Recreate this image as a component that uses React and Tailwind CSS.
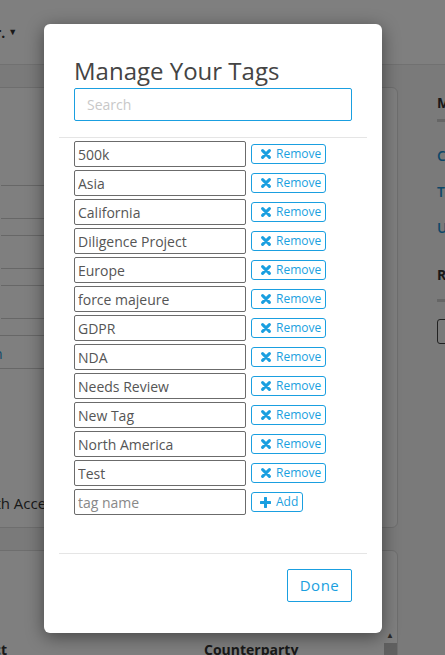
import React from "react";

const tags = [
  "500k",
  "Asia",
  "California",
  "Diligence Project",
  "Europe",
  "force majeure",
  "GDPR",
  "NDA",
  "Needs Review",
  "New Tag",
  "North America",
  "Test",
];

const XIcon = () => (
  <svg width="10" height="10" viewBox="0 0 10 10" className="shrink-0">
    <path d="M1.6 1.6 L8.4 8.4 M8.4 1.6 L1.6 8.4" stroke="#1a9fe0" strokeWidth="3" strokeLinecap="round" />
  </svg>
);

const PlusIcon = () => (
  <svg width="11" height="11" viewBox="0 0 11 11" className="shrink-0">
    <path d="M5.5 1 V10 M1 5.5 H10" stroke="#1a9fe0" strokeWidth="3" strokeLinecap="round" />
  </svg>
);

const TagRow = ({ name }) => (
  <div className="flex items-center mb-[3px]">
    <input
      defaultValue={name}
      className="w-[172px] h-[26px] border border-[#6b6b6b] rounded-[2px] pl-[3px] text-[14px] text-[#555] outline-none"
    />
    <button className="ml-[5px] h-[20px] w-[75px] flex items-center pl-[9px] gap-[5px] border border-[#1a9fe0] rounded-[3px] text-[12px] text-[#1a9fe0]">
      <XIcon />
      <span>Remove</span>
    </button>
  </div>
);

const Background = () => (
  <div className="h-[655px] bg-[#f4f4f4]">
    {/* top bar */}
    <div className="h-[65px] bg-white border-b border-[#e2e2e2] flex items-center">
      <span className="-ml-[5px] text-[14px] font-bold text-[#333]">r.</span>
      <span className="ml-[3px] text-[9px] text-[#333]">▼</span>
    </div>

    <div className="flex pt-[22px]">
      {/* left card */}
      <div className="-ml-[10px] w-[408px] shrink-0">
        <div className="h-[441px] bg-white border border-[#dcdcdc] rounded-md pt-[97px] pl-[10px]">
          <div className="flex flex-col gap-[16px] pr-[40px]">
            <div className="h-[34px] border-y border-[#cfcfcf]" />
            <div className="h-[34px] border-y border-[#cfcfcf]" />
            <div className="h-[34px] border-y border-[#cfcfcf]" />
            <div className="h-[34px] border-y border-[#cfcfcf] flex items-center pt-[3px] -ml-[7px] text-[14px] text-[#1a8fd0]">
              n
            </div>
          </div>
          <div className="mt-[123px] -ml-[21px] text-[15px] text-[#333]">with Access</div>
        </div>
        <div className="mt-[22px] h-[120px] bg-white border border-[#dcdcdc] rounded-md relative">
          <div className="flex pt-[88px] text-[14px] font-bold text-[#333]">
            <span className="-ml-[45px] w-[258px]">Contract</span>
            <span>Counterparty</span>
          </div>
          <div className="absolute left-[392px] top-[80px] w-[14px] h-[40px] flex flex-col items-center">
            <span className="text-[8px] text-[#555] leading-none">▲</span>
            <div className="mt-[4px] w-[13px] flex-1 bg-[#c1c1c1]" />
          </div>
        </div>
      </div>

      {/* right column */}
      <div className="ml-[39px] pt-[5px] text-[14px]">
        <div className="font-bold text-[#333]">Manage</div>
        <div className="mt-[6px] h-[3px] w-[60px] bg-[#ccc]" />
        <div className="mt-[23px] text-[#1a8fd0] font-semibold">Contracts</div>
        <div className="mt-[15px] text-[#1a8fd0] font-semibold">Tags</div>
        <div className="mt-[15px] text-[#1a8fd0] font-semibold">Users</div>
        <div className="mt-[26px] font-bold text-[#333]">Reports</div>
        <div className="mt-[14px] h-[3px] w-[60px] bg-[#ccc]" />
        <div className="mt-[17px] h-[25px] w-[60px] border border-[#444] rounded-[3px]" />
      </div>
    </div>
  </div>
);

export default function App() {
  return (
    <div className="relative w-[445px] h-[655px] overflow-hidden" style={{ fontFamily: "'Open Sans', sans-serif" }}>
      <Background />
      <div className="absolute inset-0 bg-black/50" />

      {/* modal */}
      <div className="absolute left-[44px] top-[24px] w-[338px] h-[609px] bg-white rounded-md shadow-[0_4px_18px_rgba(0,0,0,0.45)] flex flex-col">
        <div className="px-[30px] pt-[34px] pb-[16px]">
          <h2 className="text-[24px] leading-[26px] text-[#444] font-normal">Manage Your Tags</h2>
          <input
            placeholder="Search"
            className="mt-[4px] w-full h-[33px] border border-[#1a9fe0] rounded-[2px] pl-[12px] text-[14px] placeholder:text-[#c8c8c8] outline-none"
          />
        </div>
        <div className="mx-[15px] border-t border-[#e5e5e5]" />

        <div className="px-[30px] pt-[3px] flex-1">
          {tags.map((t) => (
            <TagRow key={t} name={t} />
          ))}
          <div className="flex items-center">
            <input
              placeholder="tag name"
              className="w-[172px] h-[26px] border border-[#6b6b6b] rounded-[2px] pl-[3px] text-[14px] placeholder:text-[#888] outline-none"
            />
            <button className="ml-[5px] h-[20px] w-[52px] flex items-center pl-[8px] gap-[5px] border border-[#1a9fe0] rounded-[3px] text-[12px] text-[#1a9fe0]">
              <PlusIcon />
              <span>Add</span>
            </button>
          </div>
        </div>

        <div className="mx-[15px] border-t border-[#e5e5e5]" />
        <div className="flex justify-end px-[30px] pt-[15px] pb-[31px]">
          <button className="w-[65px] h-[33px] border border-[#1a9fe0] rounded-[2px] text-[15px] tracking-[0.5px] text-[#1a9fe0]">
            Done
          </button>
        </div>
      </div>
    </div>
  );
}
